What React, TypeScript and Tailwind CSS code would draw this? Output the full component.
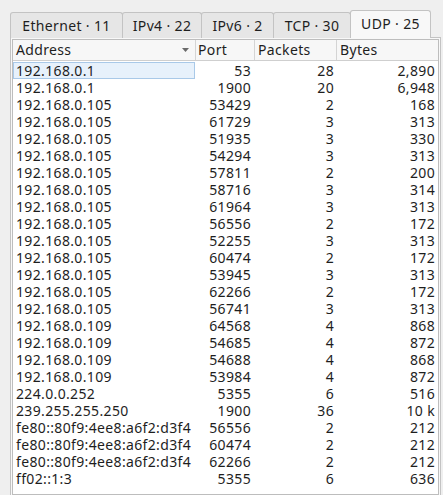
import React from "react";

type Row = { address: string; port: number; packets: number; bytes: string };

const rows: Row[] = [
  { address: "192.168.0.1", port: 53, packets: 28, bytes: "2,890" },
  { address: "192.168.0.1", port: 1900, packets: 20, bytes: "6,948" },
  { address: "192.168.0.105", port: 53429, packets: 2, bytes: "168" },
  { address: "192.168.0.105", port: 61729, packets: 3, bytes: "313" },
  { address: "192.168.0.105", port: 51935, packets: 3, bytes: "330" },
  { address: "192.168.0.105", port: 54294, packets: 3, bytes: "313" },
  { address: "192.168.0.105", port: 57811, packets: 2, bytes: "200" },
  { address: "192.168.0.105", port: 58716, packets: 3, bytes: "314" },
  { address: "192.168.0.105", port: 61964, packets: 3, bytes: "313" },
  { address: "192.168.0.105", port: 56556, packets: 2, bytes: "172" },
  { address: "192.168.0.105", port: 52255, packets: 3, bytes: "313" },
  { address: "192.168.0.105", port: 60474, packets: 2, bytes: "172" },
  { address: "192.168.0.105", port: 53945, packets: 3, bytes: "313" },
  { address: "192.168.0.105", port: 62266, packets: 2, bytes: "172" },
  { address: "192.168.0.105", port: 56741, packets: 3, bytes: "313" },
  { address: "192.168.0.109", port: 64568, packets: 4, bytes: "868" },
  { address: "192.168.0.109", port: 54685, packets: 4, bytes: "872" },
  { address: "192.168.0.109", port: 54688, packets: 4, bytes: "868" },
  { address: "192.168.0.109", port: 53984, packets: 4, bytes: "872" },
  { address: "224.0.0.252", port: 5355, packets: 6, bytes: "516" },
  { address: "239.255.255.250", port: 1900, packets: 36, bytes: "10 k" },
  { address: "fe80::80f9:4ee8:a6f2:d3f4", port: 56556, packets: 2, bytes: "212" },
  { address: "fe80::80f9:4ee8:a6f2:d3f4", port: 60474, packets: 2, bytes: "212" },
  { address: "fe80::80f9:4ee8:a6f2:d3f4", port: 62266, packets: 2, bytes: "212" },
  { address: "ff02::1:3", port: 5355, packets: 6, bytes: "636" },
];

const tabs = [
  { label: "Ethernet · 11", w: "w-[113px]" },
  { label: "IPv4 · 22", w: "w-[80px]" },
  { label: "IPv6 · 2", w: "w-[73px]" },
  { label: "TCP · 30", w: "w-[78px]" },
];

export default function App() {
  return (
    <div className="h-[495px] w-[443px] overflow-hidden bg-[#efefef] pl-[10px] pr-[2px] pt-[10px] font-['Noto_Sans',sans-serif] text-[14px] tracking-[0.35px] text-[#1e1e1e]">
      {/* tab bar */}
      <div className="flex h-[28px] items-end">
        {tabs.map((t) => (
          <div
            key={t.label}
            className={`${t.w} -mr-px flex h-[26px] items-center justify-center rounded-t-[3px] border border-b-0 border-[#c3c3c3] bg-[#e6e6e6] leading-none`}
          >
            {t.label}
          </div>
        ))}
        <div className="relative z-10 flex h-[28px] w-[81px] items-center justify-center rounded-t-[3px] border border-b-0 border-[#c3c3c3] bg-[#f8f8f8] pb-[1px] leading-none">
          UDP · 25
        </div>
      </div>

      {/* panel */}
      <div className="-mt-px h-[460px] border border-[#c3c3c3] bg-[#f8f8f8] p-px">
        <div className="h-full border border-[#bdbdbd] bg-white">
          <div className="grid h-[21px] grid-cols-[183px_59px_82px_1fr] border-b border-[#cfcfcf] bg-[#f7f7f7] leading-[20px]">
            <div className="relative border-r border-[#d4d4d4] pl-[3px]">
              Address
              <svg className="absolute right-[6px] top-[8px]" width="7" height="4" viewBox="0 0 7 4">
                <path d="M0 0 H7 L3.5 4 Z" fill="#6a6a6a" />
              </svg>
            </div>
            <div className="border-r border-[#d4d4d4] pl-[2px]">Port</div>
            <div className="border-r border-[#d4d4d4] pl-[3px]">Packets</div>
            <div className="pl-[3px]">Bytes</div>
          </div>

          <div className="pt-px">
            {rows.map((r, i) => (
              <div key={i} className="grid h-[17px] grid-cols-[182px_60px_82px_1fr] leading-[17px]">
                <div
                  className={
                    i === 0
                      ? "border border-[#a9c9e8] bg-[#e7f1fb] pl-[2px] leading-[15px]"
                      : "pl-[3px]"
                  }
                >
                  {r.address}
                </div>
                <div className="pr-[4px] text-right">{r.port}</div>
                <div className="pr-[3px] text-right">{r.packets}</div>
                <div className="pr-[3px] text-right">{r.bytes}</div>
              </div>
            ))}
          </div>
        </div>
      </div>
    </div>
  );
}
